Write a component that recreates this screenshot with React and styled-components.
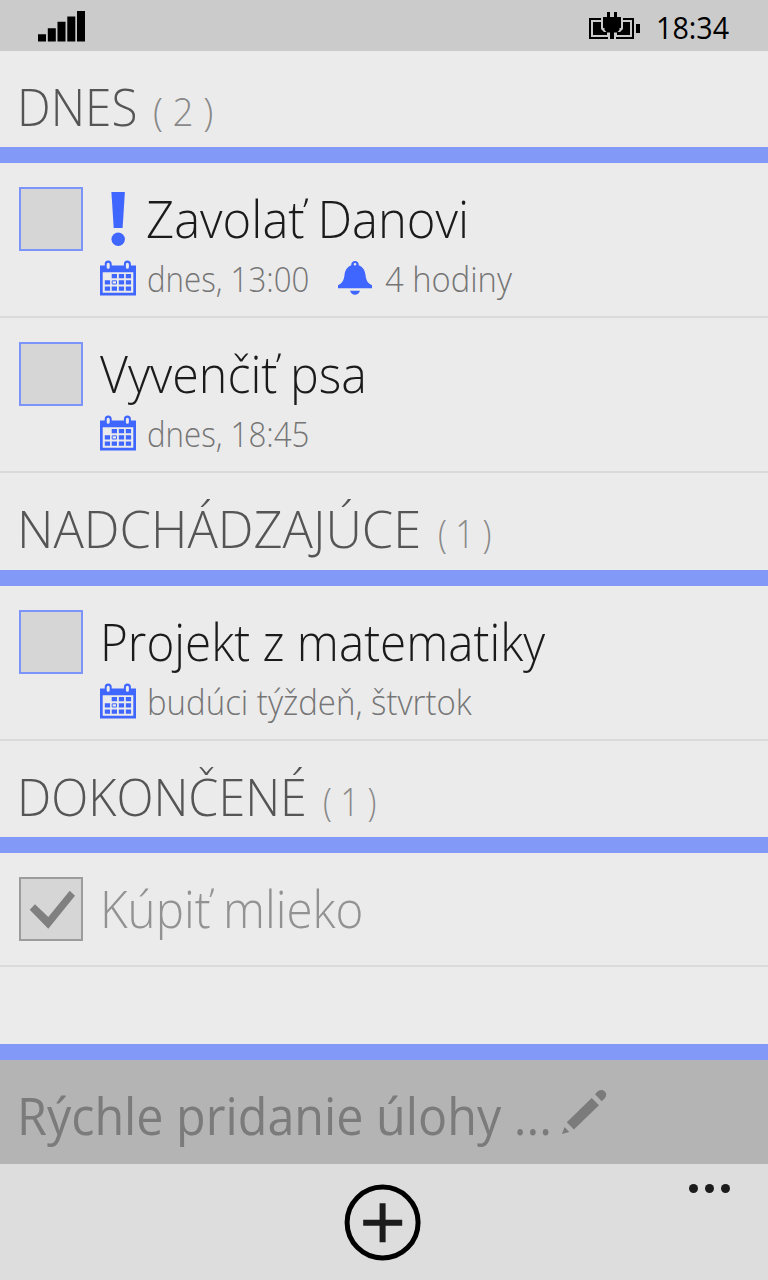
import React from "react";
import styled, { createGlobalStyle } from "styled-components";

const GlobalStyle = createGlobalStyle`
  * { box-sizing: border-box; }
  body {
    margin: 0;
    background: #ebebeb;
    font-family: "Open Sans", "Noto Sans", sans-serif;
    font-weight: 300;
  }
`;

const ACCENT = "#3f66ff";

const Screen = styled.div`
  display: flex;
  flex-direction: column;
  width: 768px;
  height: 1280px;
  background: #ebebeb;
  overflow: hidden;
`;

const StatusBar = styled.header`
  display: flex;
  flex: none;
  justify-content: space-between;
  align-items: flex-start;
  height: 51px;
  padding: 11px 36px 0 38px;
  background: #cbcbcb;
`;

const StatusRight = styled.div`
  display: flex;
  gap: 16px;
`;

/* Condensed text: the glyphs are narrowed, the box keeps its own width. */
const Label = styled.span`
  display: block;
  flex: none;
  width: ${(p) => p.$width}px;
  font-size: ${(p) => p.$size}px;
  line-height: ${(p) => p.$line}px;
  color: ${(p) => p.$color};
  white-space: nowrap;
  transform: scaleX(${(p) => p.$narrow || 1});
  transform-origin: 0 50%;
`;

const Clock = styled(Label)`
  font-weight: 400;
  margin-top: -5px;
`;

const Content = styled.main`
  flex: 1;
`;

const SectionHeader = styled.h2`
  display: flex;
  margin: 0;
  height: ${(p) => p.$height}px;
  padding: 25px 0 0 16.5px;
  font-weight: 300;
`;

const Count = styled(Label)`
  margin-top: 5px;
`;

const Rule = styled.div`
  flex: none;
  height: 16px;
  background: #8399f8;
`;

const TaskRow = styled.article`
  display: flex;
  height: ${(p) => p.$height}px;
  padding: 24px 0 0 19px;
  border-bottom: 2px solid #dadada;
`;

const Checkbox = styled.span`
  flex: none;
  width: 64px;
  height: 64px;
  margin-right: 17px;
  border: 2px solid ${(p) => (p.$done ? "#9c9c9c" : "#7a94fa")};
  background: #d6d6d6;
  svg { display: block; margin: -2px; }
`;

const TitleLine = styled.div`
  display: flex;
  height: 60px;
  margin-left: ${(p) => p.$shift || 0}px;
`;

const Title = styled(Label)`
  margin-top: 1px;
`;

const PriorityIcon = styled.svg`
  flex: none;
  margin: 4px 21px 0 11px;
`;

const MetaLine = styled.div`
  display: flex;
  align-items: flex-start;
  margin-top: 6px;
`;

const MetaText = styled(Label)`
  margin-top: 2px;
`;

const MetaIcon = styled.svg`
  flex: none;
  margin-top: ${(p) => p.$top}px;
  margin-right: ${(p) => p.$gap}px;
`;

const QuickAdd = styled.div`
  display: flex;
  flex: none;
  height: 104px;
  padding: 25px 0 0 17px;
  background: #b4b4b4;
  font-weight: 400;
`;

const PencilIcon = styled.svg`
  margin-top: 4px;
`;

const AppBar = styled.footer`
  display: grid;
  flex: none;
  grid-template-columns: 344px 78px 1fr;
  height: 116px;
  padding-right: 38px;
  background: #dddddd;
`;

const AddButton = styled.button`
  grid-column: 2;
  width: 78px;
  height: 78px;
  margin-top: 19.5px;
  padding: 0;
  border: 0;
  background: none;
  svg { display: block; }
`;

const MoreButton = styled.button`
  justify-self: end;
  align-self: start;
  display: flex;
  gap: 7px;
  margin-top: 20px;
  padding: 0;
  border: 0;
  background: none;
`;

const Dot = styled.span`
  width: 9px;
  height: 9px;
  border-radius: 50%;
  background: #1c1c1c;
`;

function Signal() {
  return (
    <svg width="48" height="31" viewBox="0 0 48 31">
      <path d="M0 23.2h8v7.3H0zM9.8 17.3h8v13.2h-8zM19.5 10.8h8v19.7h-8zM29.3 5.5h8v25h-8zM39 0h8v30.5h-8z" />
    </svg>
  );
}

function Battery() {
  return (
    <svg width="51" height="29" viewBox="0 0 51 29">
      <path d="M0 7h12v2H2v17h17v2H0zM45 7H34v2h9v17H27v2h18z" />
      <path d="M4 11h8v7l3 3h3v3H4zM41 11h-7v7l-3 3h-3v3h13z" />
      <path d="M18 1h3v5h4V1h3v5h4v11h-1.500v2l-2.500 2.500h-3V28h-4v-6.500h-3L15.500 19v-2H14V6h4z" />
      <path d="M47 13h4v9h-4z" />
    </svg>
  );
}

function Calendar() {
  return (
    <MetaIcon $top={7} $gap={11.3} width="36" height="36" viewBox="0 0 36 36">
      <path
        fill={ACCENT}
        fillRule="evenodd"
        d="M0 5.500h4.700V4a3.500 3.500 0 0 1 7 0v1.500H23.900V4a3.500 3.500 0 0 1 7 0v1.500H36v30H0zM2.700 12.300v20.400h30.600V12.300z"
      />
      <path stroke="#ebebeb" strokeWidth="3" strokeLinecap="round" d="M8.200 4.200v3M27.400 4.200v3" />
      <path
        fill={ACCENT}
        d="M11.700 14h5.300v4.300h-5.300zM18.800 14h5.300v4.300h-5.300zM25.800 14h5.300v4.300h-5.300zM4.800 20.300h5.300v4.200H4.800zM18.800 20.300h5.300v4.200h-5.300zM25.800 20.300h5.300v4.200h-5.300zM4.800 26.600h5.300v4.200H4.800zM11.700 26.600h5.300v4.200h-5.300zM18.800 26.600h5.300v4.200h-5.300zM25.800 26.600h5.300v4.200h-5.300z"
      />
      <path fill="none" stroke={ACCENT} d="M12.200 20.800h4.300v3.200h-4.300z" />
    </MetaIcon>
  );
}

function Bell() {
  return (
    <MetaIcon $top={8} $gap={13} width="34" height="34" viewBox="0 0 34 34">
      <path
        fill={ACCENT}
        fillRule="evenodd"
        d="M17 0a3.700 3.700 0 0 1 3.700 4.200C25 5.900 27 9.500 27.500 14c.6 6 2.700 8.300 6.500 10.300v3H0v-3C3.800 22.300 5.900 20 6.500 14 7 9.500 9 5.900 13.300 4.200A3.700 3.700 0 0 1 17 0zm0 1.900a1.300 1.300 0 1 0 0 2.600 1.300 1.300 0 0 0 0-2.600z"
      />
      <path fill={ACCENT} d="M12 29.800h10c-1 2.700-2.600 4-5 4s-4-1.300-5-4z" />
    </MetaIcon>
  );
}

function Check() {
  return (
    <svg width="64" height="64" viewBox="0 0 64 64">
      <path fill="#808080" d="M10.700 32.700 29.300 51.700 56 18.700 50.700 13.700 29.300 40 16 27.200z" />
    </svg>
  );
}

function Section({ name, width, narrow, count, countNarrow, height }) {
  return (
    <>
      <SectionHeader $height={height}>
        <Label $size={51} $line={60} $color="#555" $width={width} $narrow={narrow}>
          {name}
        </Label>
        <Count $size={38} $line={60} $color="#888" $width={60} $narrow={countNarrow}>
          ( {count} )
        </Count>
      </SectionHeader>
      <Rule />
    </>
  );
}

function Task({ title, narrow, shift, urgent, done, height = 155, children }) {
  return (
    <TaskRow $height={height}>
      <Checkbox $done={done}>{done && <Check />}</Checkbox>
      <div>
        <TitleLine $shift={shift}>
          {urgent && (
            <PriorityIcon width="14" height="56" viewBox="0 0 14 56">
              <path fill={ACCENT} d="M.4 1h13.500l-2.300 36H2.700z" />
              <circle fill={ACCENT} cx="7.200" cy="48.300" r="6.700" />
            </PriorityIcon>
          )}
          <Title $size={51} $line={60} $color={done ? "#929292" : "#1b1b1b"} $width={460} $narrow={narrow}>
            {title}
          </Title>
        </TitleLine>
        {children && <MetaLine>{children}</MetaLine>}
      </div>
    </TaskRow>
  );
}

function Meta({ text, width, narrow }) {
  return (
    <MetaText $size={35} $line={48} $color="#757575" $width={width} $narrow={narrow}>
      {text}
    </MetaText>
  );
}

export default function App() {
  return (
    <>
      <GlobalStyle />
      <Screen>
        <StatusBar>
          <Signal />
          <StatusRight>
            <Battery />
            <Clock $size={31} $line={42} $color="#000" $width={76} $narrow={0.925}>
              18:34
            </Clock>
          </StatusRight>
        </StatusBar>
        <Content>
          <Section name="DNES" width={136.5} narrow={0.935} count={2} countNarrow={0.97} height={96} />
          <Task title="Zavolať Danovi" narrow={0.96} urgent>
            <Calendar />
            <Meta text="dnes, 13:00" width={190.5} narrow={0.893} />
            <Bell />
            <Meta text="4 hodiny" width={130} narrow={0.935} />
          </Task>
          <Task title="Vyvenčiť psa" narrow={0.948}>
            <Calendar />
            <Meta text="dnes, 18:45" width={170} narrow={0.893} />
          </Task>
          <Section name="NADCHÁDZAJÚCE" width={421.5} narrow={0.992} count={1} countNarrow={0.86} height={96.5} />
          <Task title="Projekt z matematiky" narrow={0.9335} shift={-0.5}>
            <Calendar />
            <Meta text="budúci týždeň, štvrtok" width={330} narrow={0.942} />
          </Task>
          <Section name="DOKONČENÉ" width={306.5} narrow={0.95} count={1} countNarrow={0.86} height={96.5} />
          <Task title="Kúpiť mlieko" narrow={0.932} shift={-0.3} height={113.5} done />
        </Content>
        <Rule />
        <QuickAdd>
          <Label $size={51} $line={60} $color="#7b7b7b" $width={544} $narrow={0.95}>
            Rýchle pridanie úlohy ...
          </Label>
          <PencilIcon width="48" height="48" viewBox="0 0 48 48" fill="#7b7b7b">
            <path d="M30.700 9 38 16.200 12.900 40.500 5.800 33.300z" />
            <path d="M34 5.200C36.500 2 39 .4 41.800 1.200 44.500 2 45.700 4.400 45 7c-.4 1.600-2 3.400-4.300 5.200z" />
            <path d="M3.500 38 8.300 43 1 45z" />
          </PencilIcon>
        </QuickAdd>
        <AppBar>
          <AddButton aria-label="Pridať">
            <svg width="78" height="78" viewBox="0 0 78 78">
              <circle cx="38.600" cy="38.500" r="35.500" fill="none" stroke="#000" strokeWidth="5" />
              <path d="M19.200 38.700h39M38.600 19.200v39" stroke="#1c1c1c" strokeWidth="6" />
            </svg>
          </AddButton>
          <MoreButton aria-label="Viac">
            <Dot />
            <Dot />
            <Dot />
          </MoreButton>
        </AppBar>
      </Screen>
    </>
  );
}
